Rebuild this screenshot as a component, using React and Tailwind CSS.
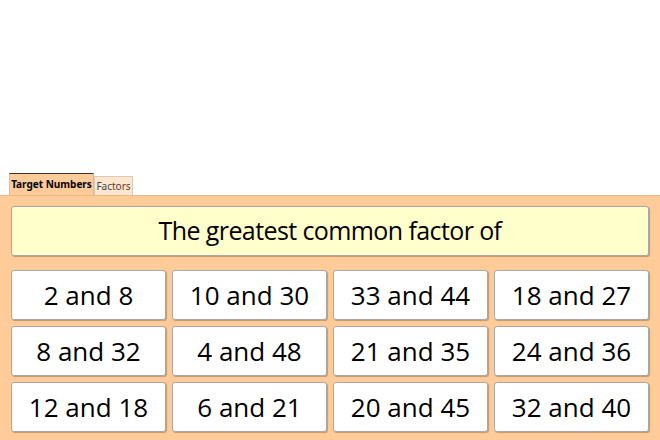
import React from 'react'

const pairs = [
  '2 and 8', '10 and 30', '33 and 44', '18 and 27',
  '8 and 32', '4 and 48', '21 and 35', '24 and 36',
  '12 and 18', '6 and 21', '20 and 45', '32 and 40',
]

const hand = { fontFamily: '"Open Sans", "DejaVu Sans", sans-serif' }

export default function App() {
  return (
    <div className="w-[660px] h-[440px] bg-white overflow-hidden flex flex-col">
      <div className="h-[173px]" />

      {/* tabs */}
      <div className="flex items-end pl-[9px] h-[22px]" style={{ fontFamily: '"Noto Sans", sans-serif' }}>
        <div className="h-[22px] w-[85px] bg-[#ffcc99] border-t border-t-[#333] border-l border-l-[#e8b888] border-r border-r-[#e8b888] flex items-center justify-center text-[10px] font-bold text-black">
          Target Numbers
        </div>
        <div className="h-[19px] w-[39px] bg-[#fde6cf] border border-b-0 border-[#dccab8] flex items-center justify-center text-[10px] text-[#444]">
          Factors
        </div>
      </div>

      {/* panel */}
      <div className="flex-1 bg-[#ffcc99] border-t border-[#e8b888] px-[11px] pt-[10px]" style={hand}>
        <div className="h-[50px] bg-[#ffffcc] border border-[#a8a8a8] rounded-[3px] shadow-[1px_1px_1px_rgba(0,0,0,0.25)] flex items-center justify-center text-[25px] tracking-[-0.6px] text-black">
          The greatest common factor of
        </div>

        <div className="grid grid-cols-4 gap-x-[6px] gap-y-[6px] mt-[14px]">
          {pairs.map((p) => (
            <div
              key={p}
              className="h-[50px] bg-white border border-[#a8a8a8] rounded-[3px] shadow-[1px_1px_1px_rgba(0,0,0,0.25)] flex items-center justify-center text-[26px] text-black"
            >
              {p}
            </div>
          ))}
        </div>
      </div>
    </div>
  )
}
